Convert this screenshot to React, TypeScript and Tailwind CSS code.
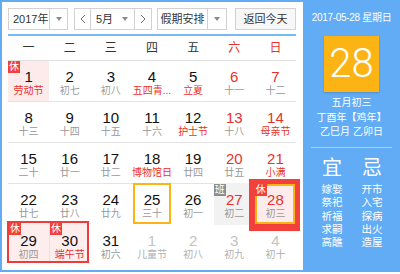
import React from "react";

type D = { n: number; l: string; nr?: boolean; lr?: boolean; g?: boolean };

const rows: D[][] = [
  [
    { n: 1, l: "劳动节", lr: true },
    { n: 2, l: "初七" },
    { n: 3, l: "初八" },
    { n: 4, l: "五四青...", lr: true },
    { n: 5, l: "立夏", lr: true },
    { n: 6, l: "十一", nr: true },
    { n: 7, l: "十二", nr: true },
  ],
  [
    { n: 8, l: "十三" },
    { n: 9, l: "十四" },
    { n: 10, l: "十五" },
    { n: 11, l: "十六" },
    { n: 12, l: "护士节", lr: true },
    { n: 13, l: "十八", nr: true },
    { n: 14, l: "母亲节", nr: true, lr: true },
  ],
  [
    { n: 15, l: "二十" },
    { n: 16, l: "廿一" },
    { n: 17, l: "廿二" },
    { n: 18, l: "博物馆日", lr: true },
    { n: 19, l: "廿四" },
    { n: 20, l: "廿五", nr: true },
    { n: 21, l: "小满", nr: true, lr: true },
  ],
  [
    { n: 22, l: "廿七" },
    { n: 23, l: "廿八" },
    { n: 24, l: "廿九" },
    { n: 25, l: "三十" },
    { n: 26, l: "初一" },
    { n: 27, l: "初二", nr: true },
    { n: 28, l: "初三", nr: true },
  ],
  [
    { n: 29, l: "初四" },
    { n: 30, l: "端午节", lr: true },
    { n: 31, l: "初六" },
    { n: 1, l: "儿童节", g: true },
    { n: 2, l: "初八", g: true },
    { n: 3, l: "初九", g: true },
    { n: 4, l: "初十", g: true },
  ],
];

function Tri() {
  return (
    <span className="inline-block h-0 w-0 border-l-[3.5px] border-r-[3.5px] border-t-[4px] border-l-transparent border-r-transparent border-t-[#8a8a8a]" />
  );
}

function Chev({ dir }: { dir: "l" | "r" }) {
  return (
    <svg width="6" height="10" viewBox="0 0 6 10">
      <polyline
        points={dir === "l" ? "5,1 1,5 5,9" : "1,1 5,5 1,9"}
        fill="none"
        stroke="#707070"
        strokeWidth="1"
      />
    </svg>
  );
}

function Badge({ t, gray }: { t: string; gray?: boolean }) {
  return (
    <div
      className={`absolute left-0 top-0 z-20 flex h-[12px] w-[12px] items-center justify-center text-[10px] leading-[12px] text-white ${
        gray ? "bg-[#8c8c8c]" : "bg-[#f2403a]"
      }`}
    >
      {t}
    </div>
  );
}

function Cell({ d, r, c }: { d: D; r: number; c: number }) {
  const numColor = d.g ? "text-[#c2c2c2]" : d.nr ? "text-[#e8312c]" : "text-[#111111]";
  const lunColor = d.g ? "text-[#b0b0b0]" : d.lr ? "text-[#e8312c]" : "text-[#999999]";
  return (
    <div className="relative">
      {r === 0 && c === 0 && (
        <>
          <div className="absolute inset-0 bg-[#fdeaea]" />
          <Badge t="休" />
        </>
      )}
      {r === 3 && c === 3 && (
        <div className="absolute bottom-[1px] left-[1.5px] right-[1.5px] top-[-1px] border-2 border-[#fcb414]" />
      )}
      {r === 3 && c === 5 && (
        <>
          <div className="absolute bottom-0 left-0 right-0 top-[-1px] bg-[#f2f2f2]" />
          <Badge t="班" gray />
        </>
      )}
      {r === 3 && c === 6 && (
        <>
          <div className="absolute bottom-[-6px] left-[-6px] right-[-4px] top-[-5px] z-10 bg-[#f2403a]" />
          <div className="absolute bottom-[1px] left-0 right-[1px] top-0 z-10 border-2 border-[#fcb414] bg-[#fdeceb]" />
          <Badge t="休" />
        </>
      )}
      <div className="relative z-30 flex flex-col items-center pt-[8px]">
        <span className={`text-[15px] leading-[16px] ${numColor}`}>{d.n}</span>
        <span className={`mt-[-1px] whitespace-nowrap text-[10px] leading-[13px] ${lunColor}`}>{d.l}</span>
      </div>
    </div>
  );
}

export default function App() {
  const weekdays = ["一", "二", "三", "四", "五", "六", "日"];
  return (
    <div className="flex h-[272px] w-[400px] border-b-2 border-l-2 border-t-2 border-[#62acf6] bg-white font-['Liberation_Sans','Noto_Sans_CJK_SC',sans-serif]">
      {/* Left: calendar */}
      <div className="w-[301px] pl-[6px] pt-[6px]">
        <div className="flex h-[22px] text-[11px] text-[#333333]">
          <div className="flex w-[60px] border border-[#d2d2d2]">
            <div className="flex flex-1 items-center pl-[4px]">2017年</div>
            <div className="flex w-[18px] items-center justify-center border-l border-[#d2d2d2]">
              <Tri />
            </div>
          </div>
          <div className="ml-[6px] flex w-[78px] border border-[#d2d2d2]">
            <div className="flex w-[16px] items-center justify-center border-r border-[#d2d2d2]">
              <Chev dir="l" />
            </div>
            <div className="flex flex-1 items-center justify-between pl-[5px] pr-[6px]">
              <span>5月</span>
              <Tri />
            </div>
            <div className="flex w-[17px] items-center justify-center border-l border-[#d2d2d2]">
              <Chev dir="r" />
            </div>
          </div>
          <div className="ml-[5px] flex w-[70px] border border-[#d2d2d2]">
            <div className="flex flex-1 items-center justify-center">假期安排</div>
            <div className="flex w-[19px] items-center justify-center border-l border-[#d2d2d2]">
              <Tri />
            </div>
          </div>
          <div className="ml-[8px] flex w-[61px] items-center justify-center border border-[#d2d2d2] bg-[#f7f7f7]">
            返回今天
          </div>
        </div>

        <div className="mt-[4px] h-[2px] w-[288px] bg-[#7ab8f6]" />

        <div className="grid h-[25px] w-[288px] grid-cols-7 items-center border-b border-[#e0e0e0] text-center text-[12px]">
          {weekdays.map((w, i) => (
            <div key={w} className={i >= 5 ? "text-[#e8312c]" : "text-[#333333]"}>
              {w}
            </div>
          ))}
        </div>

        <div className="w-[288px]">
          {rows.map((row, r) => (
            <div
              key={r}
              className={`relative grid h-[41px] grid-cols-7 ${r < 3 ? "border-b border-[#e3e3e3]" : ""}`}
            >
              {r === 4 && (
                <div className="absolute left-[-1px] top-[-4px] h-[42px] w-[82px] border-2 border-[#f03b3b] bg-[#fdeded]">
                  <div className="absolute left-[40px] top-0 h-full w-px bg-[#f6dede]" />
                  <Badge t="休" />
                  <div className="absolute left-[41px] top-0 z-20 flex h-[12px] w-[12px] items-center justify-center bg-[#f2403a] text-[10px] leading-[12px] text-white">
                    休
                  </div>
                </div>
              )}
              {row.map((d, c) => (
                <Cell key={c} d={d} r={r} c={c} />
              ))}
            </div>
          ))}
        </div>
      </div>

      {/* Right: detail panel */}
      <div className="flex flex-1 flex-col items-center bg-[#62acf6] text-white">
        <div className="mt-[9px] whitespace-nowrap text-[10px] leading-[14px] tracking-[-0.3px]">
          2017-05-28 星期日
        </div>
        <div className="mt-[11px] flex h-[56px] w-[55px] items-center justify-center bg-[#fcb414] font-['Roboto',sans-serif] text-[40px] font-light leading-none shadow-[0_1px_2px_rgba(0,0,0,0.18)]">
          28
        </div>
        <div className="mt-[4px] flex flex-col items-center text-[10px] leading-[14.5px]">
          <div>五月初三</div>
          <div className="whitespace-nowrap">丁酉年【鸡年】</div>
          <div className="whitespace-nowrap">乙巳月 乙卯日</div>
        </div>
        <div className="mt-[7.5px] h-px w-[81px] bg-[#a6d0fa]" />
        <div className="mt-[9px] flex gap-[10px] pl-[1px]">
          {[
            ["宜", "嫁娶", "祭祀", "祈福", "求嗣", "高醮"],
            ["忌", "开市", "入宅", "探病", "出火", "造屋"],
          ].map((col) => (
            <div key={col[0]} className="flex w-[30px] flex-col items-center">
              <div className="text-[20px] leading-[22px]">{col[0]}</div>
              <div className="mt-[4px] flex flex-col items-center text-[10.5px] leading-[13.3px]">
                {col.slice(1).map((t) => (
                  <div key={t}>{t}</div>
                ))}
              </div>
            </div>
          ))}
        </div>
      </div>
    </div>
  );
}
